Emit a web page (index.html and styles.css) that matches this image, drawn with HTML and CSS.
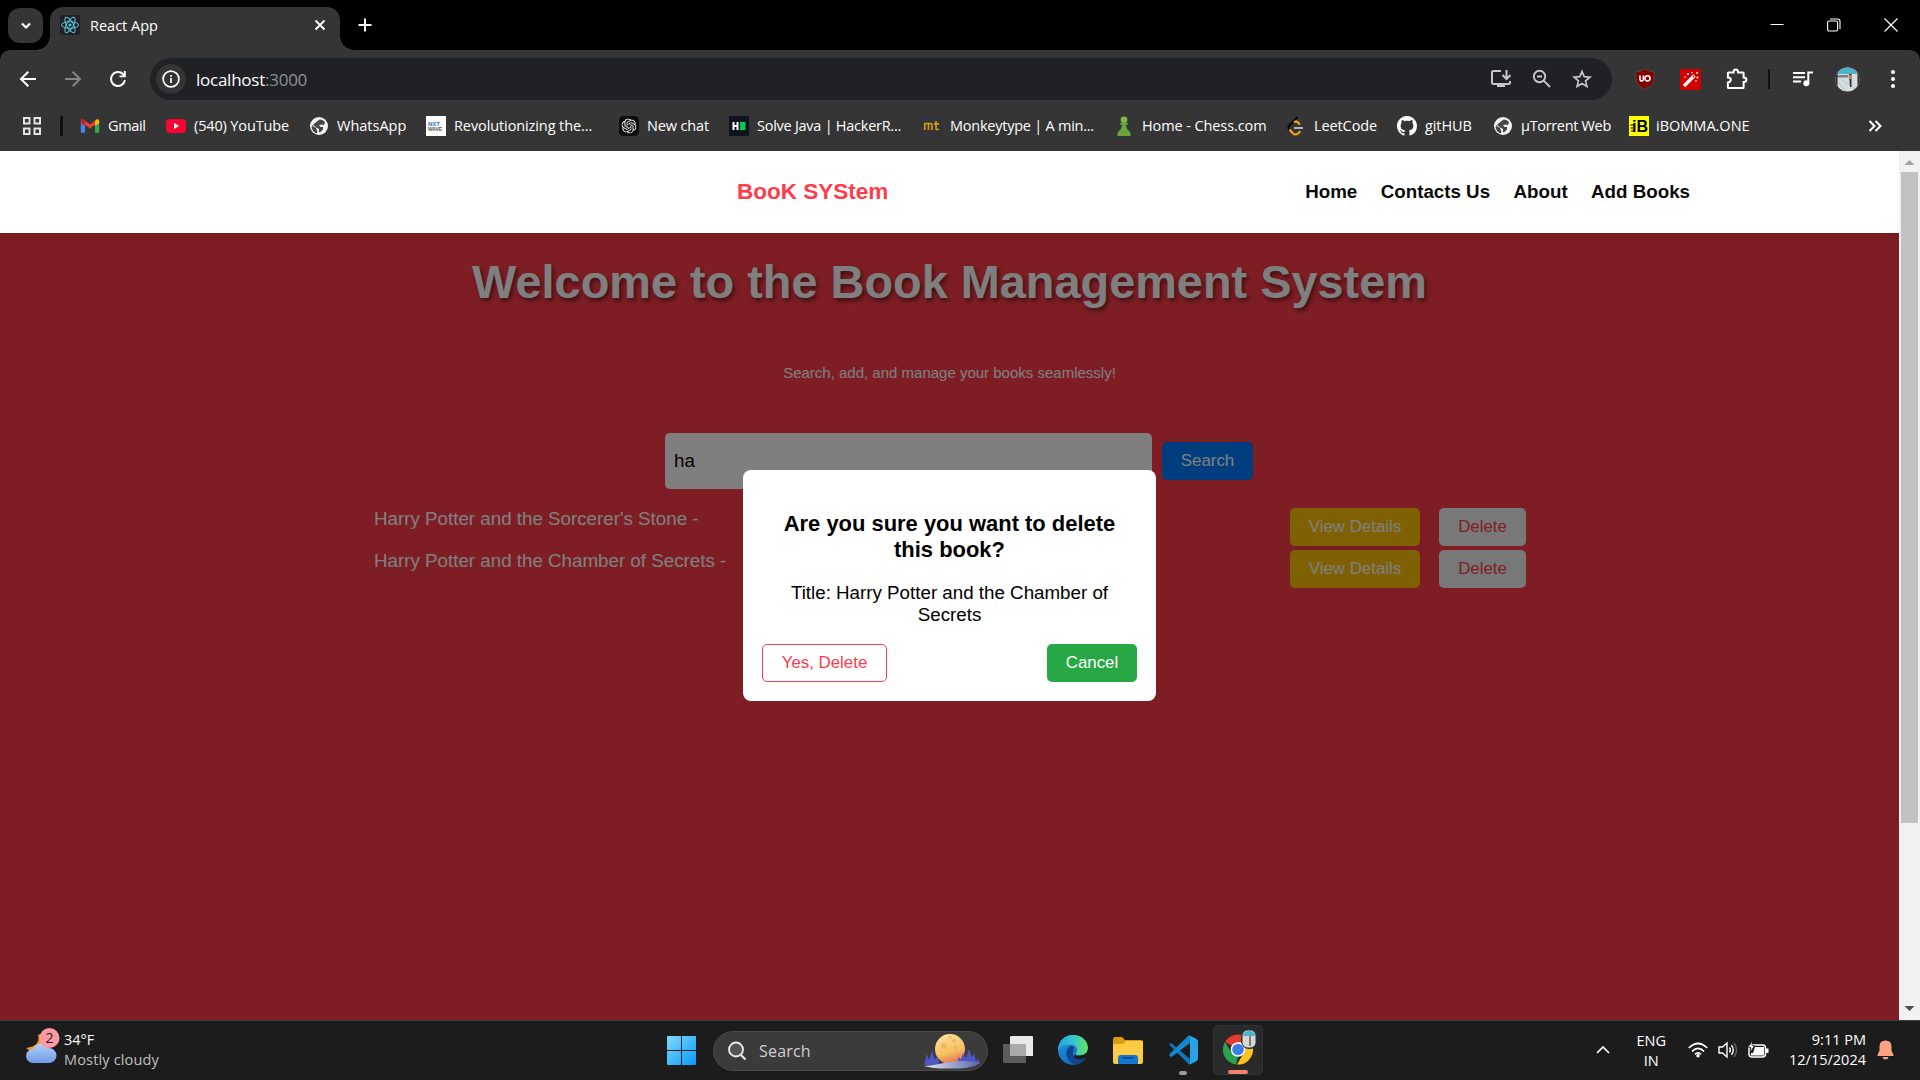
FILE: index.html
```html
<!DOCTYPE html>
<html lang="en">
<head>
<meta charset="utf-8">
<title>React App</title>
<link rel="stylesheet" href="styles.css">
</head>
<body>
<div class="screen">
  <div class="tabstrip">
    <div class="tab-search"><svg width="14" height="14" viewBox="0 0 14 14"><path d="M3 4.500l4 4 4-4" fill="none" stroke="#fff" stroke-width="2.200"/></svg></div>
    <div class="tab">
      <span class="favicon"><svg width="20" height="20" viewBox="0 0 20 20"><g fill="none" stroke="#58c4dc" stroke-width="1"><ellipse cx="10" cy="10" rx="8.600" ry="3.300"/><ellipse cx="10" cy="10" rx="8.600" ry="3.300" transform="rotate(60 10 10)"/><ellipse cx="10" cy="10" rx="8.600" ry="3.300" transform="rotate(120 10 10)"/></g><circle cx="10" cy="10" r="1.500" fill="#58c4dc"/></svg></span>
      <span class="tab-title">React App</span>
      <svg class="tab-close" width="12" height="12" viewBox="0 0 12 12"><path d="M1.500 1.500l9 9M10.500 1.500l-9 9" stroke="#fff" stroke-width="1.900"/></svg>
    </div>
    <svg class="new-tab" width="14" height="14" viewBox="0 0 14 14"><path d="M7 .5v13M.5 7h13" stroke="#fff" stroke-width="2"/></svg>
    <div class="window-controls">
      <svg width="14" height="14" viewBox="0 0 14 14"><path d="M.5 6.500h13" stroke="#fff"/></svg>
      <svg width="14" height="14" viewBox="0 0 14 14"><rect x=".6" y="3" width="10" height="10" rx="1.500" fill="none" stroke="#fff" stroke-width="1.100"/><path d="M3 1h7.500q2.500 0 2.500 2.500V11" fill="none" stroke="#fff" stroke-width="1.100"/></svg>
      <svg width="14" height="14" viewBox="0 0 14 14"><path d="M.5.500l13 13M13.500.500l-13 13" stroke="#fff" stroke-width="1.200"/></svg>
    </div>
  </div>

  <div class="chrome-ui">
    <div class="toolbar">
      <div class="nav-buttons">
        <svg width="18" height="18" viewBox="0 0 18 18"><path d="M17 9H2.500M9.300 1.800L2 9l7.300 7.200" fill="none" stroke="#fff" stroke-width="2"/></svg>
        <svg width="18" height="18" viewBox="0 0 18 18"><path d="M1 9h14.500M8.700 1.800L16 9l-7.300 7.200" fill="none" stroke="#858585" stroke-width="2"/></svg>
        <svg width="18" height="18" viewBox="0 0 18 18"><path d="M15.900 10.200A7 7 0 1 1 14 4.100l1.500 1.600" fill="none" stroke="#fff" stroke-width="2"/><path d="M16.800 1v6.300h-6.300V5.400h4.300V1z" fill="#fff"/></svg>
      </div>
      <div class="omnibox">
        <span class="site-info"><svg width="18" height="18" viewBox="0 0 18 18"><circle cx="9" cy="9" r="7.900" fill="none" stroke="#fff" stroke-width="1.700"/><path d="M9 8v5M9 5v1.800" stroke="#fff" stroke-width="1.700"/></svg></span>
        <span class="url">localhost<span class="port">:3000</span></span>
        <div class="omni-actions">
          <svg width="22" height="20" viewBox="0 0 22 20"><path d="M11 2H3.500Q2 2 2 3.500v10Q2 15 3.500 15h15q1.500 0 1.500-1.500V12" fill="none" stroke="#c7c7c7" stroke-width="2"/><path d="M7 15h8v3H7z" fill="#c7c7c7"/><path d="M16.500 1v8.500M12.500 6l4 4 4-4" fill="none" stroke="#c7c7c7" stroke-width="2"/></svg>
          <svg width="20" height="20" viewBox="0 0 20 20"><circle cx="7.500" cy="7.500" r="5.700" fill="none" stroke="#c7c7c7" stroke-width="1.900"/><path d="M11.700 11.700l6.300 6.300M5 7.500h5" stroke="#c7c7c7" stroke-width="1.900"/></svg>
          <svg width="20" height="20" viewBox="0 0 20 20"><path d="M10 2.500l2.200 5.200 5.700.5-4.300 3.700 1.300 5.500-4.900-2.900-4.900 2.900 1.300-5.500-4.300-3.700 5.700-.5z" fill="none" stroke="#c7c7c7" stroke-width="1.700"/></svg>
        </div>
      </div>
      <div class="extensions">
        <svg width="20" height="22" viewBox="0 0 20 22"><path d="M10 .8c2.500 1.900 5.500 2.800 9 2.800v7.200c0 4.500-4 7.800-9 10.200-5-2.400-9-5.700-9-10.200V3.600c3.500 0 6.500-.9 9-2.800z" fill="#800000" stroke="#5e5757" stroke-width=".6"/><path d="M5 7.500v3.700q0 1.800 2 1.800 1.300 0 1.300-1.800V7.500" fill="none" stroke="#fff" stroke-width="1.500"/><circle cx="12.500" cy="10.300" r="2.600" fill="none" stroke="#fff" stroke-width="1.500"/></svg>
        <svg width="21" height="21" viewBox="0 0 21 21"><rect width="21" height="21" rx="1" fill="#d10000"/><path d="M4 17L14.500 6.500" stroke="#fff" stroke-width="3.200"/><path d="M13 8l1.200-1.200" stroke="#d10000" stroke-width="1.200"/><g fill="#fff"><circle cx="8" cy="5" r="1.100"/><circle cx="5" cy="8" r=".8"/><circle cx="17" cy="4" r=".9"/><circle cx="12" cy="3.500" r=".8"/><circle cx="17.500" cy="8.500" r="1"/><circle cx="16" cy="12" r=".8"/></g></svg>
        <svg width="22" height="22" viewBox="0 0 22 22"><path d="M2.500 4.500h5q0-3 2.300-3t2.300 3h4.900q.6 0 .6.600v4.500q2.800 0 2.800 2.200t-2.800 2.200v5.500q0 .6-.6.600H2.500q-.6 0-.6-.6v-5q2.900-.5 2.900-2.700T1.900 9.600V5.100q0-.6.6-.6z" fill="none" stroke="#fff" stroke-width="2"/></svg>
        <i class="divider"></i>
        <svg width="20" height="18" viewBox="0 0 20 18"><path d="M0 3h12M0 7.300h12M0 11.600h8" stroke="#fff" stroke-width="2"/><path d="M15.300 13V2.500H20" fill="none" stroke="#fff" stroke-width="2"/><circle cx="13.300" cy="13.300" r="3" fill="#fff"/></svg>
        <svg class="avatar" width="25" height="25" viewBox="0 0 25 25"><clipPath id="av"><circle cx="12.500" cy="12.500" r="12"/></clipPath><g clip-path="url(#av)"><path fill="#d7dcdc" d="M0 0h25v25H0z"/><path fill="#4eb3c9" d="M0 0h25v7H0z"/><path fill="#718487" d="M0 8h13v2.500H0z"/><path d="M2 14l9 10M6 12l15 11" stroke="#a8c6cc"/><path fill="#36302d" d="M14 7h2.500v13H15z"/><path fill="#bc8761" d="M13.500 8h3v4h-3z"/><path fill="#2d2d2d" d="M0 0h2.500v25H0zM22.500 0H25v25h-2.500z"/></g></svg>
        <svg width="6" height="20" viewBox="0 0 6 20"><g fill="#fff"><circle cx="3" cy="3" r="2"/><circle cx="3" cy="10" r="2"/><circle cx="3" cy="17" r="2"/></g></svg>
      </div>
    </div>

    <div class="bookmarks">
      <svg class="apps" width="18" height="18" viewBox="0 0 18 18"><g fill="none" stroke="#e6e6e6" stroke-width="2"><path d="M1 1h5.500v5.500H1zM11.500 1H17v5.500h-5.500zM1 11.500h5.500V17H1zM11.500 11.500H17V17h-5.500z"/></g></svg>
      <i class="divider"></i>
      <a class="bm bm-gmail"><svg width="20" height="20" viewBox="0 0 20 20"><path fill="#4285f4" d="M.8 5v10.700q0 1 1 1H5V8z"/><path fill="#34a853" d="M19.200 5v10.700q0 1-1 1H15V8z"/><path fill="#ea4335" d="M.8 5.500Q.8 3 3 3.300L10 8.600l7-5.300q2.200-.3 2.200 2.200L10 12.400z"/><path fill="#fbbc04" d="M15 5l2-1.700q2.200-.3 2.200 2.200v1.700L15 10z"/><path fill="#c5221f" d="M.8 5.500Q.8 3 3 3.300L5 5v5L.8 7z"/></svg><span>Gmail</span></a>
      <a class="bm bm-yt"><svg width="20" height="20" viewBox="0 0 20 20"><rect y="3" width="20" height="14" rx="4" fill="#ff0033"/><path fill="#fff" d="M8 7l5.200 3L8 13z"/></svg><span>(540) YouTube</span></a>
      <a class="bm bm-wa"><svg width="20" height="20" viewBox="0 0 20 20"><circle cx="10" cy="10" r="9" fill="#f1f3f4"/><path d="M10.500 3.500q4 0 5.500 3l-1 2.500-3-.5-2 1 1.500 1.500h2.500v2.500L11 16.500 10 16v-3L7 11.500 4.500 9l-2 2q1 5 5 6.500l1-2-1.500-3.500L3 9.500" fill="#353535" opacity=".9"/></svg><span>WhatsApp</span></a>
      <a class="bm bm-nxt"><svg width="20" height="20" viewBox="0 0 20 20"><path fill="#fff" d="M0 0h20v20H0z"/><text x="2" y="10" class="nxt-a">NXT</text><text x="2" y="15" class="nxt-b">WAVE</text></svg><span>Revolutionizing the...</span></a>
      <a class="bm bm-gpt"><svg width="20" height="20" viewBox="0 0 20 20"><rect width="20" height="20" rx="4.500" fill="#0d0d0d"/><svg x="2.500" y="2.500" width="15" height="15" viewBox="0 0 24 24"><path fill="#f0f0f0" d="M22.282 9.821a5.985 5.985 0 0 0-.516-4.910 6.046 6.046 0 0 0-6.510-2.900A6.065 6.065 0 0 0 4.981 4.182a5.985 5.985 0 0 0-3.998 2.900 6.046 6.046 0 0 0 .743 7.097 5.980 5.980 0 0 0 .510 4.911 6.051 6.051 0 0 0 6.515 2.900A5.985 5.985 0 0 0 13.260 24a6.056 6.056 0 0 0 5.772-4.206 5.990 5.990 0 0 0 3.998-2.900 6.056 6.056 0 0 0-.748-7.073zM13.260 22.430a4.476 4.476 0 0 1-2.876-1.040l.141-.081 4.779-2.758a.795.795 0 0 0 .393-.681v-6.737l2.020 1.169a.071.071 0 0 1 .038.052v5.583a4.504 4.504 0 0 1-4.495 4.493zM3.600 18.304a4.470 4.470 0 0 1-.535-3.014l.142.085 4.783 2.759a.771.771 0 0 0 .781 0l5.843-3.369v2.332a.080.080 0 0 1-.033.062L9.740 19.950a4.500 4.500 0 0 1-6.140-1.646zM2.341 7.896a4.485 4.485 0 0 1 2.366-1.973V11.600a.766.766 0 0 0 .388.677l5.815 3.355-2.020 1.168a.076.076 0 0 1-.071 0l-4.830-2.786A4.504 4.504 0 0 1 2.341 7.872zm16.596 3.856l-5.833-3.387L15.119 7.200a.076.076 0 0 1 .071 0l4.830 2.791a4.494 4.494 0 0 1-.676 8.105v-5.678a.790.790 0 0 0-.407-.667zm2.011-3.023l-.142-.085-4.774-2.782a.776.776 0 0 0-.785 0L9.409 9.230V6.897a.066.066 0 0 1 .028-.061l4.830-2.787a4.499 4.499 0 0 1 6.681 4.660zM8.307 12.863l-2.020-1.164a.080.080 0 0 1-.038-.057V6.075a4.499 4.499 0 0 1 7.376-3.454l-.142.081-4.779 2.758a.795.795 0 0 0-.393.681zm1.097-2.365l2.602-1.500 2.607 1.500v2.999l-2.597 1.500-2.607-1.500z"/></svg></svg><span>New chat</span></a>
      <a class="bm bm-hr"><svg width="20" height="20" viewBox="0 0 20 20"><path fill="#0e141e" d="M0 0h20v20H0z"/><path d="M4.500 6v8M8.500 6v8M4.500 10h4" stroke="#fff" stroke-width="2"/><path fill="#05c951" d="M11 6h5.500v8H11z"/></svg><span>Solve Java | HackerR...</span></a>
      <a class="bm bm-mt"><svg width="20" height="20" viewBox="0 0 20 20"><rect width="20" height="20" rx="3" fill="#323437"/><path d="M2.800 14V7.500h5.500Q10 7.500 10 9v5M6.500 8v6M14 5v7.500q0 1 1 1h2M12 7.800h5" fill="none" stroke="#cf9f10" stroke-width="1.700"/></svg><span>Monkeytype | A min...</span></a>
      <a class="bm bm-chess"><svg width="20" height="20" viewBox="0 0 20 20"><circle cx="10" cy="3.800" r="3.400" fill="#81b64c"/><path fill="#69a33d" d="M6 7h8v1.500l-2 .5q.3 4 3.500 6.500 1.500 1.500 1 4.500h-13q-.5-3 1-4.500Q7.700 13 8 9l-2-.5z"/></svg><span>Home - Chess.com</span></a>
      <a class="bm bm-leet"><svg width="20" height="20" viewBox="0 0 20 20"><path d="M11.500 1L3.500 9.500q-2 2.500 0 4.500" fill="none" stroke="#080808" stroke-width="2.100"/><path d="M8 6.500q2-2.300 4 0l2 2M3.500 13.500l3.500 4q2.500 2 5 0l2.300-2.300" fill="none" stroke="#ffa116" stroke-width="2.100"/><path d="M8 12h9" stroke="#b3b3b3" stroke-width="2"/></svg><span>LeetCode</span></a>
      <a class="bm bm-git"><svg width="20" height="20" viewBox="0 0 16 16"><path fill="#fff" d="M8 0C3.580 0 0 3.580 0 8c0 3.540 2.290 6.530 5.470 7.590.4.070.55-.17.55-.38 0-.19-.01-.82-.01-1.490-2.010.37-2.530-.49-2.690-.94-.09-.23-.48-.94-.82-1.130-.28-.15-.68-.52-.01-.53.63-.01 1.080.58 1.230.82.72 1.210 1.870.87 2.330.66.070-.52.280-.87.510-1.070-1.780-.2-3.640-.89-3.640-3.950 0-.87.310-1.590.82-2.150-.08-.2-.36-1.020.08-2.120 0 0 .67-.21 2.200.82.64-.18 1.320-.27 2-.27s1.360.09 2 .27c1.530-1.040 2.200-.82 2.200-.82.440 1.100.16 1.920.08 2.120.51.560.82 1.270.82 2.150 0 3.070-1.870 3.750-3.650 3.950.29.25.54.73.54 1.480 0 1.070-.01 1.930-.01 2.200 0 .21.15.46.55.38A8.010 8.010 0 0 0 16 8c0-4.420-3.580-8-8-8z"/></svg><span>gitHUB</span></a>
      <a class="bm bm-ut"><svg width="20" height="20" viewBox="0 0 20 20"><circle cx="10" cy="10" r="9" fill="#f1f3f4"/><path d="M10.500 3.500q4 0 5.500 3l-1 2.500-3-.5-2 1 1.500 1.500h2.500v2.500L11 16.500 10 16v-3L7 11.500 4.500 9l-2 2q1 5 5 6.500l1-2-1.500-3.500L3 9.500" fill="#353535" opacity=".9"/></svg><span>µTorrent Web</span></a>
      <a class="bm bm-ib"><svg width="20" height="20" viewBox="0 0 20 20"><path fill="#ff0" d="M0 0h20v20H0z"/><text x="3" y="15.500" class="ib">iB</text><path d="M1.500 9h3M1.500 12h2.500M2 15h3" stroke="#000" stroke-width="1.200"/></svg><span>iBOMMA.ONE</span></a>
      <svg class="more" width="14" height="12" viewBox="0 0 14 12"><path d="M1.500 1l5 5-5 5M7.500 1l5 5-5 5" fill="none" stroke="#fff" stroke-width="2"/></svg>
    </div>
  </div>

  <div class="viewport">
    <div class="page">
      <header class="site-header">
        <div class="brand">BooK SYStem</div>
        <nav><a>Home</a><a>Contacts Us</a><a>About</a><a>Add Books</a></nav>
      </header>
      <main class="home">
        <h1>Welcome to the Book Management System</h1>
        <p class="tagline">Search, add, and manage your books seamlessly!</p>
        <div class="search-row"><div class="search-input">ha</div><button class="btn btn-search">Search</button></div>
        <ul class="books">
          <li><span class="book-title">Harry Potter and the Sorcerer's Stone -</span><button class="btn btn-view">View Details</button><button class="btn btn-delete">Delete</button></li>
          <li><span class="book-title">Harry Potter and the Chamber of Secrets -</span><button class="btn btn-view">View Details</button><button class="btn btn-delete">Delete</button></li>
        </ul>
        <div class="overlay"></div>
        <div class="modal">
          <h2>Are you sure you want to delete this book?</h2>
          <p>Title: Harry Potter and the Chamber of Secrets</p>
          <div class="modal-actions"><button class="btn btn-confirm">Yes, Delete</button><button class="btn btn-cancel">Cancel</button></div>
        </div>
      </main>
    </div>
    <div class="scrollbar">
      <svg width="21" height="21" viewBox="0 0 21 21"><path d="M5.500 14l5-5 5 5z" fill="#a3a3a3"/></svg>
      <div class="thumb"></div>
      <svg class="down" width="21" height="21" viewBox="0 0 21 21"><path d="M5.500 7l5 5 5-5z" fill="#505050"/></svg>
    </div>
  </div>

  <div class="taskbar">
    <div class="weather">
      <svg width="36" height="38" viewBox="0 0 36 38"><defs><linearGradient id="cl" x2="0" y2="1"><stop stop-color="#b5d0f8"/><stop offset="1" stop-color="#6f9be6"/></linearGradient></defs><path d="M13 7q3 11-12 13 4 4 9 3l8-6V5z" fill="#f79a1c"/><path d="M8 35a7 7 0 0 1 0-14 9 9 0 0 1 16-1 7.500 7.500 0 0 1 0 15z" fill="url(#cl)"/><circle cx="24.500" cy="10" r="10" fill="#ff99a4"/><text x="24.500" y="15" class="badge-num">2</text></svg>
      <div class="weather-text"><span>34°F</span><span class="dim">Mostly cloudy</span></div>
    </div>
    <div class="dock">
      <svg class="start" width="29" height="29" viewBox="0 0 29 29"><defs><linearGradient id="wn" x2="1" y2="1"><stop stop-color="#80dcfb"/><stop offset="1" stop-color="#0897ff"/></linearGradient></defs><path fill="url(#wn)" d="M1 0h13v14H0V1q0-1 1-1zM15 0h13q1 0 1 1v13H15zM0 15h14v14H1q-1 0-1-1zM15 15h14v13q0 1-1 1H15z"/></svg>
      <div class="task-search">
        <svg width="20" height="20" viewBox="0 0 20 20"><circle cx="9" cy="8.500" r="7" fill="#555" stroke="#e8e8e8" stroke-width="1.900"/><path d="M13.500 13.500l5 5" stroke="#e8e8e8" stroke-width="2.200"/></svg>
        <span>Search</span>
        <svg class="moon" width="58" height="36" viewBox="0 0 58 36"><defs><linearGradient id="mn" x2=".3" y2="1"><stop stop-color="#ffe5a0"/><stop offset=".7" stop-color="#f8bf61"/><stop offset="1" stop-color="#e87b5c"/></linearGradient><linearGradient id="sn"><stop stop-color="#e8e9ee"/><stop offset="1" stop-color="#5765a8"/></linearGradient></defs><circle cx="27" cy="16" r="15" fill="url(#mn)"/><g fill="#f0b95c"><circle cx="21" cy="13" r="3"/><circle cx="31" cy="8" r="2"/><circle cx="33" cy="16" r="2.500"/><circle cx="27" cy="4" r="1.500"/></g><path d="M1 32l3-11 2 6 3-9 3 9 2-4 3 9zM34 30l2-6 2 3 2-7 3 5 3-9 3 8 2-3 2 7 2-2 2 5z" fill="#4c56c5"/><path d="M1 33q12-1 21-3.500 18-3 35 0-6 6-26 6Q10 36 1 33z" fill="url(#sn)"/></svg>
      </div>
      <svg class="app taskview" width="30" height="28" viewBox="0 0 30 28"><path d="M0 8h23v19H1q-1 0-1-1z" fill="#5c5c5c"/><path d="M8 0h21q1 0 1 1v19H7V1z" fill="#e9e9e9"/><path d="M7 8h16v12H7z" fill="#aaa"/></svg>
      <svg class="app edge" width="30" height="30" viewBox="0 0 30 30"><defs><linearGradient id="eg"><stop stop-color="#22a3df"/><stop offset=".5" stop-color="#35c5d0"/><stop offset="1" stop-color="#64e45a"/></linearGradient><linearGradient id="eb" x2=".6" y2="1"><stop stop-color="#249fe3"/><stop offset="1" stop-color="#1264b7"/></linearGradient></defs><circle cx="15" cy="15" r="15" fill="url(#eb)"/><path d="M0 14C1 5 7 0 15 0c9 0 15 6 15 13 0 5-4 7.500-8 7.500-3 0-5-1-4-2.500 3-4 0-8.500-6-8.500C6 9.500 1 12 0 16z" fill="url(#eg)"/><path d="M10 13c-4 6 0 14 7 16.700 6-1 10-4.700 11-7.700-6 3-12 2-13-3-.5-3 1-4 1-6 0-3-4-3-6 0z" fill="#12448c"/><path d="M18 18q-2 3 4 2.500Q30 20 30 13v9l-3 1q-8 3-11-1z" fill="#1c1c1c"/></svg>
      <svg class="app folder" width="30" height="27" viewBox="0 0 30 27"><path d="M0 2q0-2 2-2h7l3 3h16q2 0 2 2v8H0z" fill="#dc9c10"/><path d="M0 7h10l3-3h17v21q0 2-2 2H2q-2 0-2-2z" fill="#fdca45"/><path d="M5 27v-6q0-3 3-3h14q3 0 3 3v6z" fill="#1177cf"/><path d="M9 21h12" stroke="#09478a" stroke-width="1.500"/></svg>
      <div class="app-tile"><svg width="30" height="30" viewBox="0 0 30 30"><path d="M1 9.500L3 8l19 16-1 5.500zM1 20.500L3 22 22 6.500 21 .5z" fill="#0c78bd"/><path d="M21 .3l7 3.200q2 1 2 3v17q0 2-2 3l-7 3.200 1-5.200V6z" fill="#28a3ea"/><path d="M21 .3L1.500 19l2 3L22 8z" fill="#1388d2"/></svg><i class="dot"></i></div>
      <div class="app-tile active"><svg width="36" height="38" viewBox="0 0 36 38"><path d="M2 13a15 15 0 0 1 26 0H15v7z" fill="#e33b2e"/><path d="M2 13l6.500 10.500L15 27l-2 8.500A15 15 0 0 1 2 13z" fill="#2ba24c"/><path d="M15 13h13a15 15 0 0 1-14 22.500L21.500 23z" fill="#fcc31e"/><circle cx="15" cy="20.500" r="7.300" fill="#fff"/><circle cx="15" cy="20.500" r="5.800" fill="#3b7ded"/><rect x="18" y="0" width="17" height="20" rx="8" fill="#243438"/><rect x="19.500" y="1.500" width="13" height="17" rx="5" fill="#d6d9d9"/><path d="M20 5q6-7 12 0v2H20z" fill="#4eb3c9"/><path d="M27 7v10" stroke="#6b5345" stroke-width="1.500"/></svg><i class="bar"></i></div>
    </div>
    <div class="tray">
      <svg width="14" height="8" viewBox="0 0 14 8"><path d="M1 7l6-6 6 6" fill="none" stroke="#fff" stroke-width="1.700"/></svg>
      <div class="lang"><span>ENG</span><span>IN</span></div>
      <div class="status">
        <svg width="20" height="16" viewBox="0 0 20 16"><path d="M.8 6q9.200-9 18.400 0M4 9.300q6-6 12 0M7 12.300q3-3 6 0" fill="none" stroke="#fff" stroke-width="1.700"/><circle cx="10" cy="13.800" r="1.700" fill="#fff"/></svg>
        <svg width="20" height="18" viewBox="0 0 20 18"><path d="M1 6h3.500L9 2v14l-4.500-4H1z" fill="none" stroke="#fff" stroke-width="1.400"/><path d="M11.500 6.500q1.700 2.500 0 5M13.500 4.200q3.500 4.800 0 9.600" fill="none" stroke="#fff" stroke-width="1.400"/><path d="M16 2q5 7 0 14" fill="none" stroke="#666" stroke-width="1.400"/></svg>
        <svg width="21" height="18" viewBox="0 0 21 18"><rect x="1" y="4" width="16.500" height="12" rx="3" fill="none" stroke="#fff" stroke-width="1.500"/><path fill="#fff" d="M7 6h9v8.500H3V12h2zM18 7.500h2.500v4.500H18z"/><path d="M4 0L.5 6.500H3l-1 5 4.500-7H4z" fill="#fff" stroke="#1c1c1c" stroke-width=".6"/></svg>
      </div>
      <div class="clock"><span>9:11 PM</span><span>12/15/2024</span></div>
      <svg class="bell" width="17" height="20" viewBox="0 0 17 20"><path d="M8.500.5q6 0 6 6v4l2 4.500v1H.5v-1l2-4.500v-4q0-6 6-6zM5.500 17h6q-.5 2.500-3 2.500t-3-2.500z" fill="#fba383"/></svg>
    </div>
  </div>
</div>
</body>
</html>
```
FILE: styles.css
```css
* { box-sizing: border-box; }
body { margin: 0; background: #000; font-family: "Open Sans", "Noto Sans", sans-serif; font-size: 14.5px; color: #fff; }
svg { display: block; flex: none; }
button { font: inherit; }
.screen { width: 1920px; height: 1080px; display: flex; flex-direction: column; overflow: hidden; }

/* tab strip */
.tabstrip { height: 50px; padding: 7px 0 0 8px; display: flex; background: #000; flex: none; }
.tab-search { width: 35px; height: 35px; margin-top: 1px; border-radius: 12px; background: #353535; display: grid; place-items: center; }
.tab { position: relative; width: 290px; height: 43px; margin-left: 7px; padding: 0 14px 7px 10px; border-radius: 13px 13px 0 0; background: #353535; display: flex; align-items: center; }
.tab::before, .tab::after { content: ""; position: absolute; bottom: 0; width: 14px; height: 14px; }
.tab::before { left: -14px; background: radial-gradient(circle at 0 0, transparent 13.5px, #353535 14px); }
.tab::after { right: -14px; background: radial-gradient(circle at 100% 0, transparent 13.5px, #353535 14px); }
.favicon { background: #212121; border-radius: 2px; margin-right: 10px; }
.tab-close { margin-left: auto; }
.new-tab { margin: 11px 0 0 18px; }
.window-controls { display: flex; gap: 43px; margin: 11px 22px 0 auto; }

/* toolbar */
.chrome-ui { height: 101px; flex: none; background: #353535; border-radius: 10px 10px 0 0; }
.toolbar { display: flex; align-items: center; padding: 8px 0 0 19px; height: 50px; }
.nav-buttons { display: flex; gap: 27px; width: 131px; }
.omnibox { width: 1462px; height: 42px; border-radius: 21px; background: #202124; display: flex; align-items: center; padding: 0 20px 0 6px; }
.site-info { width: 30px; height: 30px; border-radius: 50%; background: #353535; display: grid; place-items: center; margin-right: 10px; }
.url { font-size: 17px; letter-spacing: -.25px; }
.port { color: #8f9194; }
.omni-actions { display: flex; gap: 20px; margin-left: auto; align-items: center; }
.extensions { display: flex; align-items: center; flex: 1; padding-left: 23px; }
.extensions svg:nth-child(2) { margin-left: 25px; }
.extensions svg:nth-child(3) { margin-left: 25px; }
.extensions .divider { margin: 0 23px 0 20px; }
.extensions .avatar { margin: 0 30px 0 22px; }
.divider { width: 2px; height: 20px; background: #111; }

/* bookmarks */
.bookmarks { display: flex; align-items: center; height: 51px; padding: 0 38px 0 23px; }
.bookmarks .divider { margin: 0 17px 0 19px; width: 3px; }
.bm { display: flex; align-items: center; gap: 8px; flex: none; white-space: nowrap; letter-spacing: -.1px; }
.more { margin-left: auto; }
.nxt-a { font: bold 6px "Liberation Sans", sans-serif; fill: #2f78b7; }
.nxt-b { font: bold 5px "Liberation Sans", sans-serif; fill: #555; }
.ib { font: bold 16px "Liberation Sans", sans-serif; fill: #000; }
.bm-gmail { width: 86px; letter-spacing: -.35px; }
.bm-yt { width: 143px; letter-spacing: -.14px; }
.bm-wa { width: 117px; letter-spacing: 0; }
.bm-nxt { width: 193px; }
.bm-gpt { width: 110px; letter-spacing: -.14px; }
.bm-hr { width: 193px; letter-spacing: -.26px; }
.bm-mt { width: 192px; letter-spacing: -.24px; }
.bm-chess { width: 172px; }
.bm-leet { width: 111px; }
.bm-git { width: 96px; }
.bm-ut { width: 136px; letter-spacing: -.33px; }
.bm-ib { letter-spacing: 0; gap: 7px; }

/* page */
.viewport { height: 869px; flex: none; display: flex; font-family: "Liberation Sans", Arial, sans-serif; font-size: 18.75px; }
.page { width: 1899px; display: flex; flex-direction: column; }
.site-header { height: 82px; background: #fff; display: flex; align-items: center; padding: 0 209px 1px 737px; justify-content: space-between; font-weight: bold; }
.brand { font-size: 22.5px; color: #ff3b4c; }
nav { display: flex; gap: 23.4px; color: #0a0a0a; }
.home { position: relative; flex: 1; background: #fc3b48; text-align: center; padding-top: 22px; }
h1 { margin: 0; font-size: 46.875px; line-height: 54px; text-shadow: 2px 3px 4px rgba(0,0,0,.5); }
.tagline { margin: 55px 0 0; font-size: 15px; line-height: 17px; }
.search-row { display: flex; align-items: center; gap: 10px; padding-left: 665px; margin-top: 52px; }
.search-input { width: 487px; height: 56px; border-radius: 5px; background: #fff; color: #000; text-align: left; padding: 0 9px; line-height: 56px; }
.btn { height: 38px; border: 0; border-radius: 5px; padding: 0 19px; font-size: 16.875px; color: #fff; line-height: 36px; }
.btn-search { background: #007bff; width: 91px; padding: 0; }
.books { list-style: none; margin: 19px 0 0; padding: 0 373px 0 374px; display: grid; gap: 4px; }
.books li { display: flex; }
.book-title { margin-right: auto; line-height: 21px; }
.btn-view { width: 130px; background: #ffc107; padding: 0; }
.btn-delete { width: 87px; background: #f1f1f1; color: #ff3b4c; margin-left: 19px; padding: 0; }
.overlay { position: absolute; inset: 0; background: linear-gradient(rgba(0,0,0,.54), rgba(0,0,0,.5) 8px); }
.modal { position: absolute; left: 743px; top: 237px; width: 413px; height: 231px; border-radius: 8px; background: #fff; color: #000; padding: 41px 19px 0; }
.modal h2 { margin: 0; font-size: 21.94px; line-height: 26px; padding: 0 15px; }
.modal p { margin: 19px 0 18px; line-height: 22px; padding: 0 15px; }
.modal-actions { display: flex; justify-content: space-between; }
.btn-confirm { width: 125px; padding: 0; background: #fff; border: 1px solid #ff3b4c; color: #ff3b4c; line-height: 34px; }
.btn-cancel { width: 90px; padding: 0; background: #28a745; }
.scrollbar { width: 21px; background: #f1f1f1; display: flex; flex-direction: column; }
.thumb { width: 17px; height: 651px; background: #c1c1c1; margin-left: 2px; }
.down { margin-top: auto; }

/* taskbar */
.taskbar { height: 60px; background: #1c1c1c; border-top: 1px solid #3f3f3f; display: flex; flex: none; }
.weather { display: flex; padding: 7px 0 0 25px; width: 667px; }
.weather-text { display: flex; flex-direction: column; margin-left: 3px; line-height: 20px; padding-top: 2px; }
.dim { color: #c0c0c0; letter-spacing: .16px; }
.badge-num { font: 14px "Open Sans", sans-serif; text-anchor: middle; fill: #1c1c1c; }
.dock { display: flex; align-items: center; }
.task-search { width: 275px; height: 40px; border-radius: 20px; background: #3b3b3b; border: 1px solid #4a4a4a; margin-left: 17px; display: flex; align-items: center; padding: 0 6px 0 13px; font-size: 16px; letter-spacing: .2px; color: #d0d0d0; gap: 12px; }
.moon { margin-left: auto; }
.taskview { margin: 0 0 2px 15px; }
.edge { margin: 0 0 1px 25px; }
.folder { margin: 0 0 1px 25px; }
.app-tile { position: relative; width: 50px; height: 50px; display: grid; place-items: center; margin: 0 0 2px 15px; border-radius: 5px; }
.app-tile.active { margin-left: 5px; background: #2a2a2a; border: 1px solid #333; padding: 0 0 4px 6px; }
.dot, .bar { position: absolute; bottom: 0; height: 4px; border-radius: 2px; }
.dot { width: 8px; left: 21px; background: #9a9a9a; }
.bar { width: 20px; left: 14px; background: #f3836b; }
.tray { display: flex; align-items: center; margin-left: auto; padding: 0 26px 2px 0; }
.lang { display: flex; flex-direction: column; align-items: center; line-height: 20px; margin: 2px 22px 0 26px; }
.status { display: flex; gap: 10px; align-items: center; }
.clock { display: flex; flex-direction: column; align-items: flex-end; line-height: 20px; width: 97px; margin-right: 11px; }
```
